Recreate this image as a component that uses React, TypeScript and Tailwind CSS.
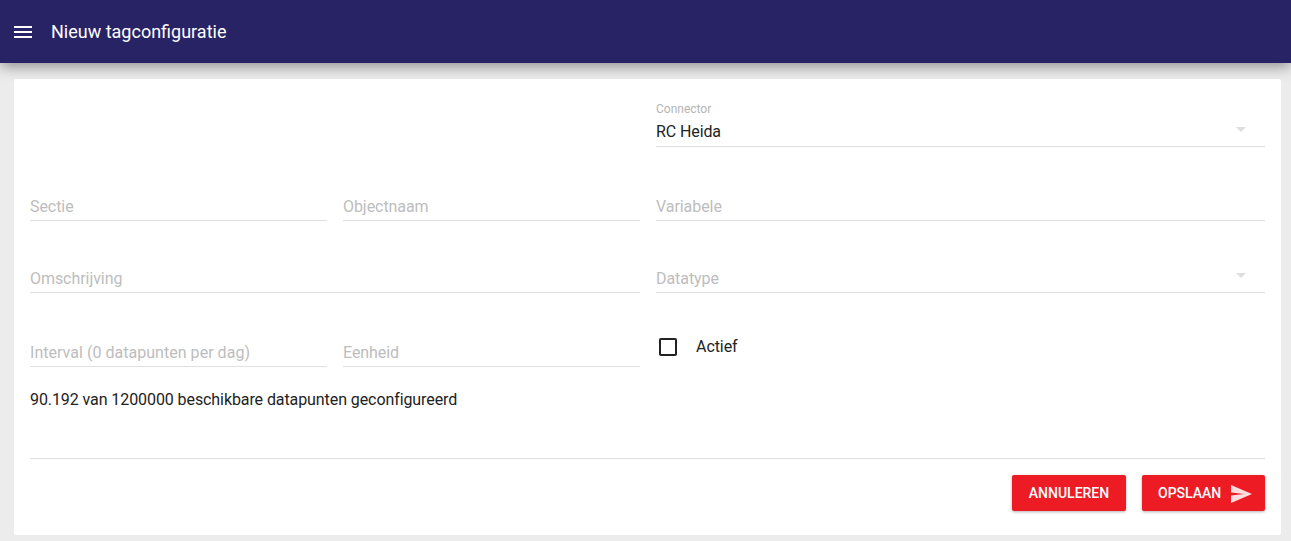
import React from "react";

const font = { fontFamily: "Roboto, sans-serif" };

function Field({ label, className = "", arrow = false, tracking = "tracking-[-0.06px]" }: { label: string; className?: string; arrow?: boolean; tracking?: string }) {
  return (
    <div className={`relative h-[50px] border-b border-[#e0e0e0] flex items-end pb-[4px] ${className}`}>
      <span className={`text-[16px] leading-[19px] ${tracking} text-[#bdbdbd]`}>{label}</span>
      {arrow && <Caret top="top-[30px]" />}
    </div>
  );
}

function Caret({ top }: { top: string }) {
  return <span className={`absolute right-[19px] ${top} w-0 h-0 border-l-[5px] border-r-[5px] border-t-[5px] border-l-transparent border-r-transparent border-t-[#dedede]`} />;
}

export default function App() {
  return (
    <div style={font} className="h-[541px] w-[1291px] overflow-hidden bg-[#ececec] flex flex-col">
      <header className="h-[63px] shrink-0 bg-[#282365] flex items-center pl-[14px] gap-[19px] text-white shadow-[0_3px_14px_rgba(0,0,0,0.42)]">
        <svg width="18" height="12" viewBox="0 0 18 12" fill="white"><path d="M0 12h18v-2H0v2zm0-5h18V5H0v2zm0-7v2h18V0H0z" /></svg>
        <span className="text-[18px] font-normal">Nieuw tagconfiguratie</span>
      </header>
      <main className="mt-[16px] ml-[14px] mr-[10px] h-[456px] bg-white rounded-[2px] px-[16px] flex flex-col">
        <div className="flex gap-[16px]">
          <div className="w-[610px]" />
          <div className="relative flex-1 h-[68px] border-b border-[#e0e0e0] flex items-end pb-[5px]">
            <span className="absolute top-[23px] left-0 text-[12px] leading-[14px] text-[#b4b4b4]">Connector</span>
            <span className="text-[16px] leading-[19px] tracking-[-0.1px] text-[#222]">RC Heida</span>
            <Caret top="top-[48px]" />
          </div>
        </div>
        <div className="flex gap-[16px] mt-[24px]">
          <Field label="Sectie" className="w-[297px]" />
          <Field label="Objectnaam" className="w-[297px]" />
          <Field label="Variabele" className="flex-1" />
        </div>
        <div className="flex gap-[16px] mt-[22px]">
          <Field label="Omschrijving" className="w-[610px]" />
          <Field label="Datatype" className="flex-1" arrow />
        </div>
        <div className="flex gap-[16px] mt-[24px]">
          <Field label="Interval (0 datapunten per dag)" className="w-[297px]" tracking="tracking-[0.03px]" />
          <Field label="Eenheid" className="w-[297px]" />
          <div className="flex-1 flex items-center pl-[3px] h-[40px] mt-[10px]">
            <span className="w-[18px] h-[18px] border-2 border-[#222] rounded-[2px]" />
            <span className="ml-[19px] text-[16px] tracking-[-0.06px] text-[#222]">Actief</span>
          </div>
        </div>
        <p className="mt-[23px] text-[16px] leading-[19px] tracking-[-0.085px] text-[#222]">90.192 van 1200000 beschikbare datapunten geconfigureerd</p>
        <div className="mt-[49px] border-t border-[#e0e0e0] flex justify-end gap-[16px] pt-[16px]">
          <button className="h-[36px] w-[114px] bg-[#ed1c24] rounded-[2px] text-white text-[14px] font-medium shadow-[0_1px_3px_rgba(0,0,0,0.3)]">ANNULEREN</button>
          <button className="h-[36px] w-[123px] bg-[#ed1c24] rounded-[2px] text-white text-[14px] font-medium shadow-[0_1px_3px_rgba(0,0,0,0.3)] flex items-center pl-[16px] gap-[10px]">
            OPSLAAN
            <svg className="mt-[2px]" width="21" height="18" viewBox="0 0 21 18" fill="#ffdcde"><path d="M0 18l21-9L0 0v7.6l13 1.4-13 1.4z" /></svg>
          </button>
        </div>
      </main>
    </div>
  );
}
